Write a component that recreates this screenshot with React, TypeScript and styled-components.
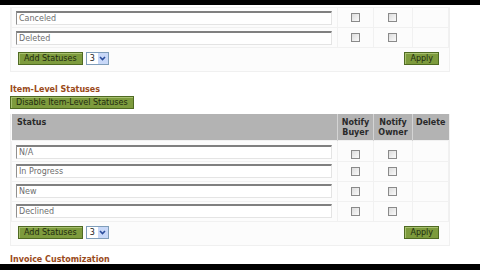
import React from "react";
import styled, { createGlobalStyle } from "styled-components";

const Global = createGlobalStyle`
  html, body { margin: 0; padding: 0; background: #000; }
  body { font-family: "DejaVu Sans", Verdana, sans-serif; font-size: 8px; }
`;

const Screen = styled.div`
  width: 480px;
  height: 270px;
  display: flex;
  flex-direction: column;
  background: #000;
  overflow: hidden;
`;

const Page = styled.div`
  margin-top: 5px;
  height: 259px;
  background: #fff;
  padding: 2px 0 0 10px;
  box-sizing: border-box;
  overflow: hidden;
`;

const Panel = styled.div`
  width: 440px;
  background: #fcfcfc;
  border: 1px solid #f0f0f0;
  border-top: none;
  box-sizing: border-box;
`;

const Table = styled.table`
  border-collapse: collapse;
  width: 100%;
  table-layout: fixed;
`;

const HeadCell = styled.th<{ $center?: boolean }>`
  height: 26px;
  background: #b3b3b3;
  color: #2a2a2a;
  font-weight: bold;
  font-size: 8px;
  line-height: 10px;
  text-align: ${(p) => (p.$center ? "center" : "left")};
  vertical-align: top;
  padding: 4px 0 0 ${(p) => (p.$center ? 0 : 5)}px;
  border-left: 1px solid ${(p) => (p.$center ? "#d4d4d4" : "transparent")};
  box-sizing: border-box;
`;

const Cell = styled.td<{ $center?: boolean }>`
  height: 20px;
  padding: 0 5px 0 4px;
  text-align: ${(p) => (p.$center ? "center" : "left")};
  vertical-align: middle;
  border: 1px solid #f1f1f1;
  box-sizing: border-box;
`;

const TextInput = styled.div`
  height: 14px;
  box-sizing: border-box;
  border-top: 2px solid #808080;
  border-left: 1px solid #909090;
  border-right: 1px solid #e4e4e4;
  border-bottom: 1px solid #e4e4e4;
  background: #fff;
  color: #6e6e6e;
  font-size: 8px;
  line-height: 11px;
  padding-left: 2px;
  white-space: nowrap;
`;

const Check = styled.span`
  display: inline-block;
  width: 9px;
  height: 9px;
  box-sizing: border-box;
  border: 1px solid #8a8a8a;
  background: linear-gradient(135deg, #dcdcdc, #fafafa);
  vertical-align: middle;
`;

const Footer = styled.div`
  display: flex;
  align-items: center;
  justify-content: space-between;
  padding: 4px 10px 6px 7px;
`;

const FooterLeft = styled.div`
  display: flex;
  align-items: center;
  gap: 3px;
`;

const GreenButton = styled.div`
  height: 13px;
  box-sizing: border-box;
  padding: 0 5px;
  background: #7d9b3d;
  border: 1px solid #4f6a22;
  box-shadow: inset 1px 1px 0 #a8c070;
  color: #1f2a10;
  font-size: 8px;
  line-height: 11px;
  white-space: nowrap;
  display: inline-block;
`;

const Select = styled.div`
  width: 23px;
  height: 13px;
  box-sizing: border-box;
  border: 1px solid #7f9db9;
  background: #fff;
  display: flex;
  align-items: center;
  justify-content: space-between;
  padding-left: 3px;
  color: #222;
  font-size: 8px;
`;

const SelectArrow = styled.span`
  width: 10px;
  height: 11px;
  background: #c8d8f8;
  display: flex;
  align-items: center;
  justify-content: center;
`;

const Heading = styled.div`
  color: #9a4a1a;
  font-weight: bold;
  font-size: 8px;
  line-height: 10px;
`;

const HeadingBlock = styled.div`
  margin-top: 13px;
  display: flex;
  flex-direction: column;
  gap: 1px;
  margin-bottom: 5px;
`;

const BottomHeading = styled(Heading)`
  margin-top: 9px;
`;

const Arrow = () => (
  <svg width="7" height="5" viewBox="0 0 7 5">
    <path d="M1 1 L3.5 3.5 L6 1" stroke="#2b4d9c" strokeWidth="1.6" fill="none" />
  </svg>
);

const StatusRow = ({ label }: { label: string }) => (
  <tr>
    <Cell>
      <TextInput>{label}</TextInput>
    </Cell>
    <Cell $center>
      <Check />
    </Cell>
    <Cell $center>
      <Check />
    </Cell>
    <Cell />
  </tr>
);

const FooterBar = () => (
  <Footer>
    <FooterLeft>
      <GreenButton>Add Statuses</GreenButton>
      <Select>
        3
        <SelectArrow>
          <Arrow />
        </SelectArrow>
      </Select>
    </FooterLeft>
    <GreenButton>Apply</GreenButton>
  </Footer>
);

const Col = styled.col<{ $w?: number }>`
  width: ${(p) => (p.$w ? `${p.$w}px` : "auto")};
`;

const Cols = () => (
  <colgroup>
    <Col />
    <Col $w={36} />
    <Col $w={39} />
    <Col $w={36} />
  </colgroup>
);

const RowsBody = styled.tbody`
  tr:first-child td { height: 21px; vertical-align: bottom; padding-bottom: 2px; }
`;

export default function App() {
  return (
    <>
      <Global />
      <Screen>
        <Page>
          <Panel>
            <Table>
              <Cols />
              <tbody>
                <StatusRow label="Canceled" />
                <StatusRow label="Deleted" />
              </tbody>
            </Table>
            <FooterBar />
          </Panel>
          <HeadingBlock>
            <Heading>Item-Level Statuses</Heading>
            <div>
              <GreenButton>Disable Item-Level Statuses</GreenButton>
            </div>
          </HeadingBlock>
          <Panel>
            <Table>
              <Cols />
              <thead>
                <tr>
                  <HeadCell>Status</HeadCell>
                  <HeadCell $center>
                    Notify
                    <br />
                    Buyer
                  </HeadCell>
                  <HeadCell $center>
                    Notify
                    <br />
                    Owner
                  </HeadCell>
                  <HeadCell $center>Delete</HeadCell>
                </tr>
              </thead>
              <RowsBody>
                <StatusRow label="N/A" />
                <StatusRow label="In Progress" />
                <StatusRow label="New" />
                <StatusRow label="Declined" />
              </RowsBody>
            </Table>
            <FooterBar />
          </Panel>
          <BottomHeading>Invoice Customization</BottomHeading>
        </Page>
      </Screen>
    </>
  );
}
